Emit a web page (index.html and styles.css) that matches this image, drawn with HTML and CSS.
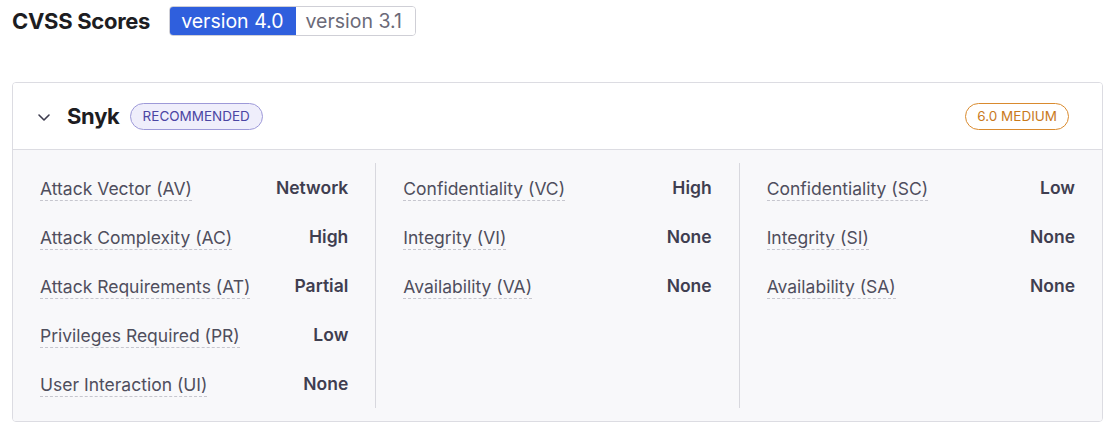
FILE: index.html
```html
<!DOCTYPE html>
<html lang="en">
<head>
<meta charset="utf-8">
<title>CVSS Scores</title>
<link rel="stylesheet" href="styles.css">
</head>
<body>
<div class="page">
  <div class="title-row">
    <h2 class="title">CVSS Scores</h2>
    <div class="toggle">
      <button class="toggle-btn active">version 4.0</button>
      <button class="toggle-btn">version 3.1</button>
    </div>
  </div>

  <section class="card">
    <header class="card-header">
      <svg class="chevron" width="14" height="9" viewBox="0 0 14 9"><path d="M2 2 L7 7 L12 2" fill="none" stroke="#3d3c4e" stroke-width="1.6" stroke-linecap="round" stroke-linejoin="round"/></svg>
      <span class="vendor">Snyk</span>
      <span class="badge badge-rec">RECOMMENDED</span>
      <span class="spacer"></span>
      <span class="badge badge-sev">6.0 MEDIUM</span>
    </header>
    <div class="card-body">
      <div class="col">
        <div class="row"><span class="label">Attack Vector (AV)</span><span class="value">Network</span></div>
        <div class="row"><span class="label">Attack Complexity (AC)</span><span class="value">High</span></div>
        <div class="row"><span class="label">Attack Requirements (AT)</span><span class="value">Partial</span></div>
        <div class="row"><span class="label">Privileges Required (PR)</span><span class="value">Low</span></div>
        <div class="row"><span class="label">User Interaction (UI)</span><span class="value">None</span></div>
      </div>
      <div class="col">
        <div class="row"><span class="label">Confidentiality (VC)</span><span class="value">High</span></div>
        <div class="row"><span class="label">Integrity (VI)</span><span class="value">None</span></div>
        <div class="row"><span class="label">Availability (VA)</span><span class="value">None</span></div>
      </div>
      <div class="col">
        <div class="row"><span class="label">Confidentiality (SC)</span><span class="value">Low</span></div>
        <div class="row"><span class="label">Integrity (SI)</span><span class="value">None</span></div>
        <div class="row"><span class="label">Availability (SA)</span><span class="value">None</span></div>
      </div>
    </div>
  </section>
</div>
</body>
</html>
```

FILE: styles.css
```css
* { box-sizing: border-box; }
html, body { margin: 0; padding: 0; background: #ffffff; }
body {
  font-family: Inter, Roboto, "Liberation Sans", Arial, sans-serif;
  color: #3d3c4e;
}
.page { padding: 6px 17px 0 12px; }

.title-row {
  display: flex;
  align-items: center;
  gap: 19px;
  height: 30px;
}
.title {
  margin: 0;
  font-size: 22px;
  font-weight: 700;
  color: #1d1d22;
  letter-spacing: -0.3px;
}
.toggle {
  display: flex;
  border: 1px solid #cfcfd6;
  border-radius: 4px;
  overflow: hidden;
  height: 30px;
}
.toggle-btn {
  font-family: inherit;
  font-size: 19.5px;
  border: none;
  background: #fff;
  color: #6b6a78;
  padding: 0 13px 0 10px;
  margin: 0;
  line-height: 28px;
}
.toggle-btn.active {
  background: #2f5fdd;
  color: #ffffff;
  padding: 0 12px 0 11px;
}

.card {
  margin-top: 46px;
  border: 1px solid #dcdce2;
  border-radius: 4px;
  overflow: hidden;
}
.card-header {
  display: flex;
  align-items: center;
  height: 67px;
  padding: 0 33px 0 24px;
  border-bottom: 1px solid #dcdce2;
  background: #fff;
}
.chevron { margin-right: 16px; margin-top: 2px; }
.vendor {
  font-size: 22px;
  font-weight: 700;
  color: #1d1d22;
  margin-right: 10px;
  letter-spacing: -0.3px;
}
.badge {
  display: inline-flex;
  align-items: center;
  height: 27px;
  border-radius: 14px;
  padding: 0 12px;
  font-size: 13.5px;
  font-weight: 400;
}
.badge-sev { padding: 0 11px; }
.badge-rec {
  background: #efeefb;
  border: 1px solid #9d99d8;
  color: #4b45a3;
}
.badge-sev {
  background: #fff;
  border: 1px solid #d98a2e;
  color: #c97a1c;
}
.spacer { flex: 1; }

.card-body {
  display: flex;
  background: #f8f8fa;
  padding: 13px 0 13px;
}
.col {
  flex: 1;
  padding: 0 27px 0 27px;
}
.col + .col { border-left: 1px solid #d8d8de; }
.row {
  display: flex;
  justify-content: space-between;
  align-items: center;
  height: 49px;
  font-size: 17.5px;
}
.label {
  color: #4f4e5d;
  border-bottom: 1px dashed #c6c6ce;
  line-height: 22px;
  margin-top: 4px;
}
.value {
  font-weight: 600;
  color: #3f3e50;
}
```
